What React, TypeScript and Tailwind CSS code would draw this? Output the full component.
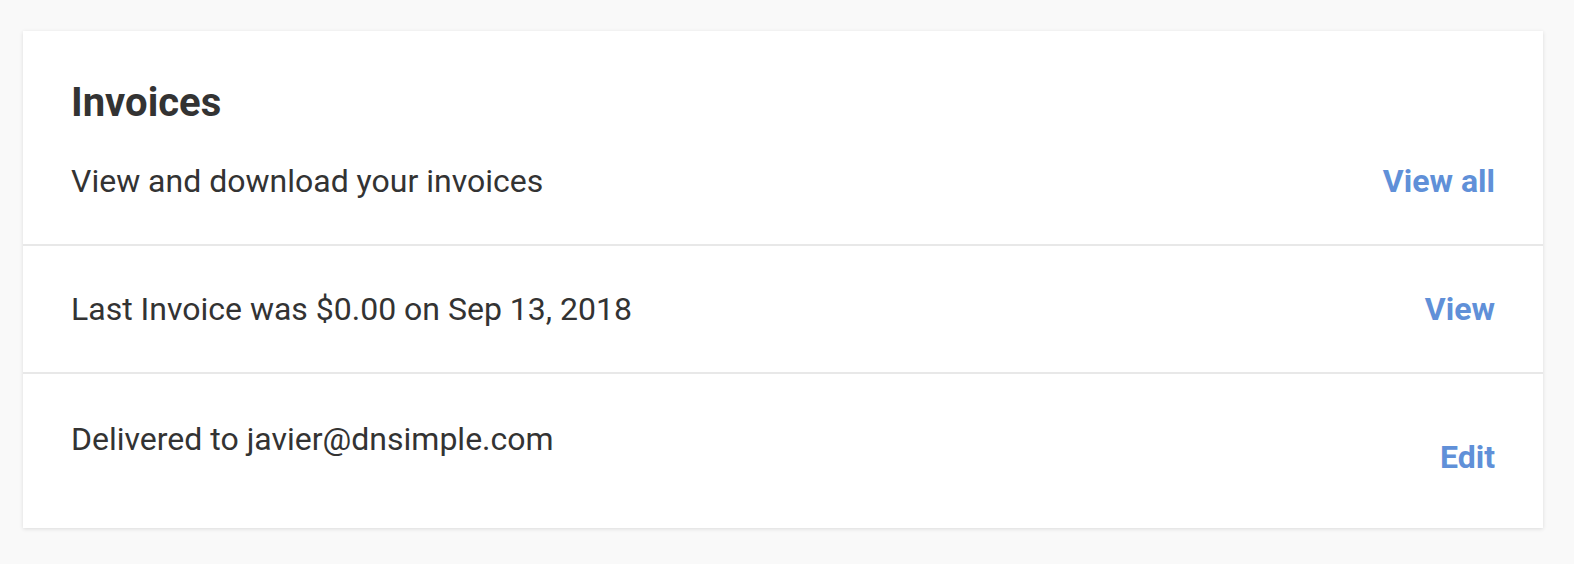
export default function App() {
  return (
    <div className="min-h-[564px] bg-[#f9f9f9] pt-[31px] pl-[23px] pr-[31px] pb-[37px]" style={{ fontFamily: 'Roboto, "Liberation Sans", sans-serif' }}>
      <div className="bg-white shadow-[0_1px_4px_rgba(0,0,0,0.12)] text-[#333333]">
        {/* header */}
        <div className="px-12 pt-12 pb-[44px] border-b-2 border-[#e8e8e8]">
          <h2 className="text-[40px] leading-[48px] font-bold">Invoices</h2>
          <div className="mt-[35px] flex items-center justify-between">
            <p className="text-[32px] leading-[38px]">View and download your invoices</p>
            <a href="#" className="text-[32px] leading-[38px] font-bold text-[#6090d8]">View all</a>
          </div>
        </div>

        <div className="px-12 py-[44px] border-b-2 border-[#e8e8e8] flex items-center justify-between">
          <p className="text-[32px] leading-[38px]">Last Invoice was $0.00 on Sep 13, 2018</p>
          <a href="#" className="text-[32px] leading-[38px] font-bold text-[#6090d8]">View</a>
        </div>

        <div className="px-12 pt-[46px] pb-[52px] flex items-start justify-between">
          <p className="text-[32px] leading-[38px]">Delivered to javier@dnsimple.com</p>
          <a href="#" className="mt-[18px] text-[32px] leading-[38px] font-bold text-[#6090d8]">Edit</a>
        </div>
      </div>
    </div>
  )
}
